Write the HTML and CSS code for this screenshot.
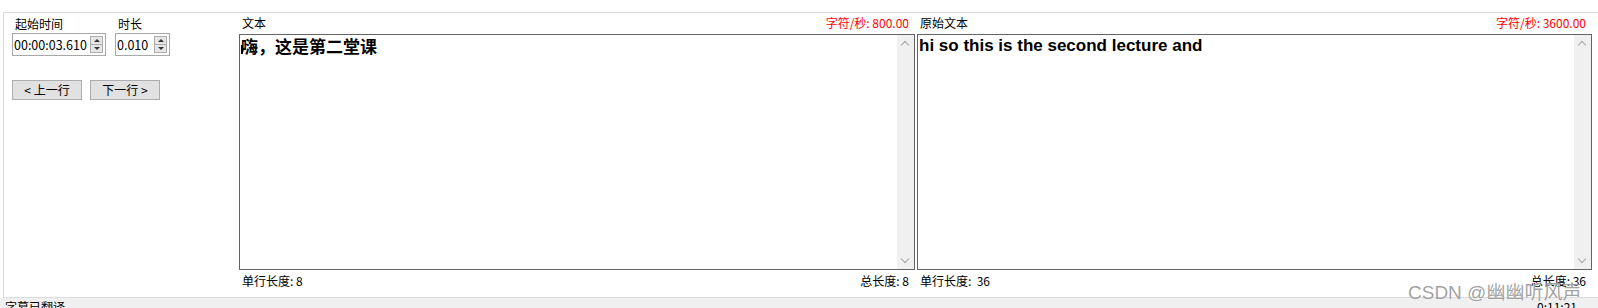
FILE: index.html
```html
<!DOCTYPE html>
<html lang="zh-CN">
<head>
    <meta charset="UTF-8">
    <title>字幕编辑</title>
    <link rel="stylesheet" href="styles.css">
</head>
<body>
    <div class="window">
        <div class="panel">
            <div class="time-column">
                <div class="time-fields">
                    <div class="field">
                        <label>起始时间</label>
                        <div class="spin spin-wide">
                            <span class="spin-value">00:00:03.610</span>
                            <span class="spin-buttons"><span class="spin-up"></span><span class="spin-down"></span></span>
                        </div>
                    </div>
                    <div class="field">
                        <label>时长</label>
                        <div class="spin spin-narrow">
                            <span class="spin-value">0.010</span>
                            <span class="spin-buttons"><span class="spin-up"></span><span class="spin-down"></span></span>
                        </div>
                    </div>
                </div>
                <div class="nav-buttons">
                    <button>&lt; 上一行</button>
                    <button>下一行 &gt;</button>
                </div>
            </div>

            <div class="text-column">
                <div class="text-header">
                    <span>文本</span>
                    <span class="cps">字符/秒: 800.00</span>
                </div>
                <div class="text-box">
                    <div class="text-content cjk"><span class="caret"></span>嗨，这是第二堂课</div>
                    <div class="scrollbar"><span class="arrow-up"></span><span class="arrow-down"></span></div>
                </div>
                <div class="text-footer">
                    <span>单行长度: 8</span>
                    <span>总长度: 8</span>
                </div>
            </div>

            <div class="text-column">
                <div class="text-header">
                    <span>原始文本</span>
                    <span class="cps">字符/秒: 3600.00</span>
                </div>
                <div class="text-box">
                    <div class="text-content">hi so this is the second lecture and</div>
                    <div class="scrollbar"><span class="arrow-up"></span><span class="arrow-down"></span></div>
                </div>
                <div class="text-footer">
                    <span>单行长度:&nbsp;&nbsp;36</span>
                    <span>总长度: 36</span>
                </div>
            </div>
        </div>

        <div class="status-bar">
            <span>字幕已翻译</span>
            <span class="status-right">0:11:21</span>
        </div>

        <div class="watermark">CSDN @幽幽听风声</div>
    </div>
</body>
</html>
```

FILE: styles.css
```css
body {
    margin: 0;
    background: #ffffff;
    font-family: "Noto Sans CJK SC", "Noto Sans", sans-serif;
    font-size: 12px;
    color: #000;
}

.window {
    position: relative;
    width: 1598px;
    height: 308px;
    overflow: hidden;
    padding-top: 12px;
    box-sizing: border-box;
}

.panel {
    display: flex;
    margin-left: 3px;
    height: 286px;
    box-sizing: border-box;
    border-top: 1px solid #dcdcdc;
    border-left: 1px solid #dcdcdc;
    border-bottom: 1px solid #dcdcdc;
}

/* left column: start time / duration */
.time-column {
    width: 235px;
    flex-shrink: 0;
    padding: 3px 0 0 8px;
    box-sizing: border-box;
}

.time-fields {
    display: flex;
    gap: 9px;
}

.field label {
    display: block;
    height: 16px;
    line-height: 16px;
    padding-left: 3px;
    margin-bottom: 1px;
}

.spin {
    display: flex;
    align-items: center;
    height: 23px;
    border: 1px solid #a8a8a8;
    box-sizing: border-box;
    background: #fff;
    padding: 0 2px 0 1px;
}

.spin-wide {
    width: 94px;
}

.spin-narrow {
    width: 55px;
}

.spin-value {
    flex: 1;
    font-size: 12.5px;
    line-height: 21px;
}

.spin-buttons {
    display: flex;
    flex-direction: column;
    width: 13px;
    height: 17px;
}

.spin-up, .spin-down {
    position: relative;
    flex: 1;
    border: 1px solid #adadad;
    background: #e6e6e6;
}

.spin-down {
    border-top: none;
}

.spin-up::after, .spin-down::after {
    content: "";
    position: absolute;
    left: 3px;
    top: 2px;
    border-left: 3px solid transparent;
    border-right: 3px solid transparent;
}

.spin-up::after {
    border-bottom: 3px solid #333;
}

.spin-down::after {
    top: 2px;
    border-top: 3px solid #333;
}

.nav-buttons {
    display: flex;
    gap: 8px;
    margin-top: 24px;
}

.nav-buttons button {
    width: 70px;
    height: 20px;
    padding: 0;
    border: 1px solid #adadad;
    background: #e1e1e1;
    font-family: inherit;
    font-size: 12px;
    color: #000;
    line-height: 18px;
}

/* text columns */
.text-column {
    display: flex;
    flex-direction: column;
    width: 676px;
    flex-shrink: 0;
}

.text-column + .text-column {
    margin-left: 2px;
    width: 675px;
}

.text-header, .text-footer {
    display: flex;
    justify-content: space-between;
    height: 20px;
    line-height: 20px;
    padding: 0 6px 0 3px;
}

.text-header {
    height: 21px;
    padding-top: 0;
}

.cps {
    color: #ff0000;
}

.text-box {
    display: flex;
    height: 236px;
    border: 1px solid #646464;
    box-sizing: border-box;
    background: #fff;
}

.text-content {
    flex: 1;
    font-family: "Liberation Sans", "Noto Sans CJK SC", sans-serif;
    font-weight: bold;
    font-size: 17px;
    line-height: 21px;
    padding-left: 1px;
}

.text-content.cjk {
    font-family: "Noto Sans CJK SC", sans-serif;
    font-size: 17px;
}

.caret {
    display: inline-block;
    width: 2px;
    height: 9px;
    background: #000;
    vertical-align: -1px;
    margin-right: -2px;
}

.scrollbar {
    position: relative;
    width: 17px;
    background: #f0f0f0;
}

.arrow-up, .arrow-down {
    position: absolute;
    left: 5px;
    width: 5px;
    height: 5px;
    border-left: 1.5px solid #a6a6a6;
    border-top: 1.5px solid #a6a6a6;
}

.arrow-up {
    top: 7px;
    transform: rotate(45deg);
}

.arrow-down {
    bottom: 7px;
    transform: rotate(225deg);
}

.text-footer {
    padding-top: 0;
    line-height: 22px;
}

/* status bar */
.status-bar {
    display: flex;
    justify-content: space-between;
    height: 10px;
    background: #f0f0f0;
    padding: 1px 21px 0 5px;
    line-height: 16px;
}

.watermark {
    position: absolute;
    left: 1408px;
    top: 277px;
    font-family: "Liberation Sans", "Noto Sans CJK SC", sans-serif;
    font-size: 19px;
    color: rgba(120, 120, 120, 0.7);
    text-shadow: 0 0 1px #fff;
}
```
